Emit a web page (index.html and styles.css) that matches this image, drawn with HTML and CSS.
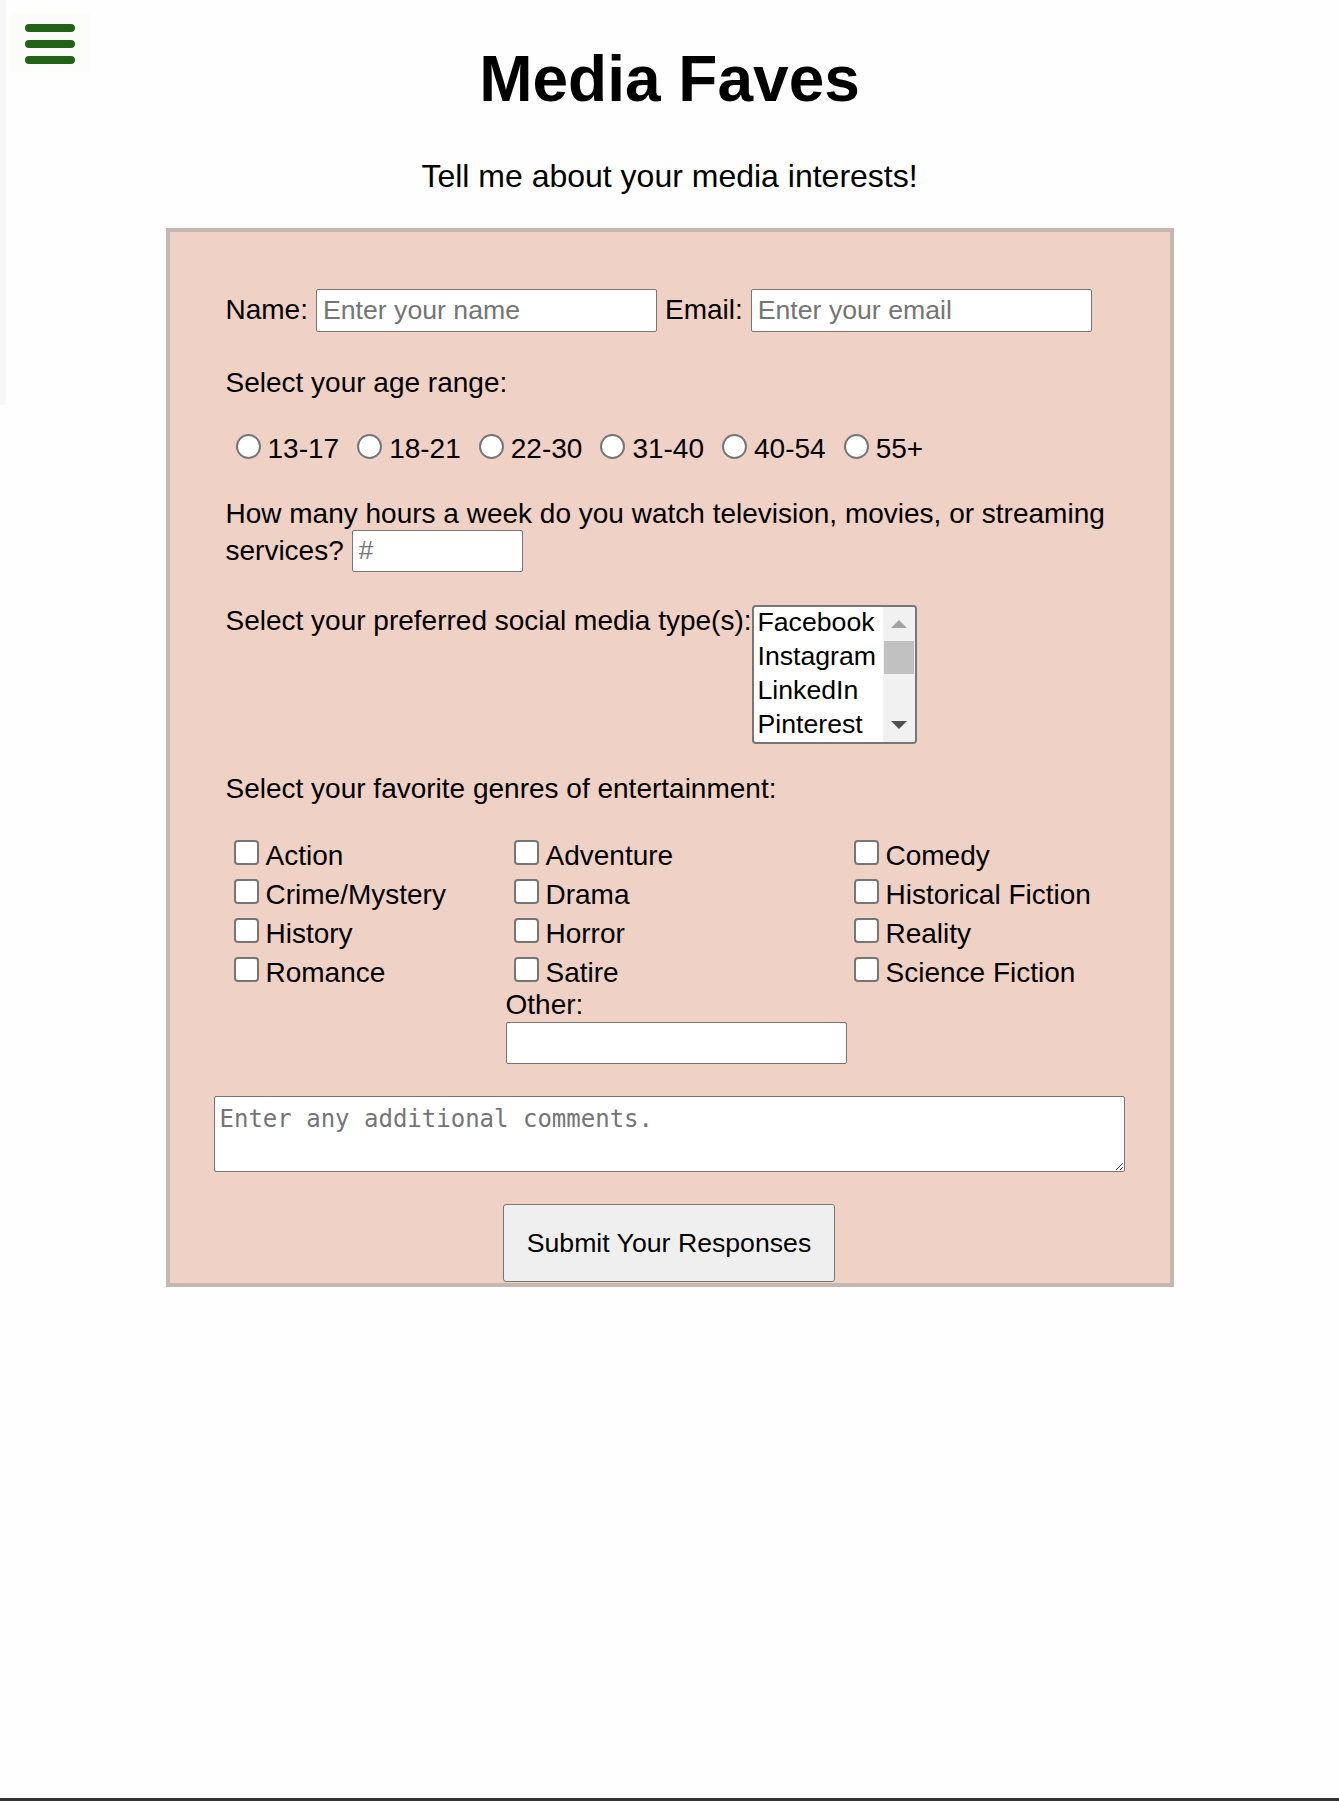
FILE: index.html
```html
<!DOCTYPE html>
<html lang="en">
<head>
<meta charset="utf-8">
<title>Media Faves</title>
<link rel="stylesheet" href="styles.css">
</head>
<body>
<div class="page">
  <nav class="sidenav" aria-label="Site menu"></nav>
  <button class="menu-btn" type="button" aria-label="Open menu"><span></span><span></span><span></span></button>

  <header class="masthead">
    <h1 class="title">Media Faves</h1>
    <p class="tagline">Tell me about your media interests!</p>
  </header>

  <form class="survey">
    <div class="questions">
      <div class="row-contact">
        <label class="field">Name:<input class="text-input" type="text" placeholder="Enter your name"></label>
        <label class="field">Email:<input class="text-input" type="email" placeholder="Enter your email"></label>
      </div>

      <p class="q age-label">Select your age range:</p>
      <div class="age-row">
        <label class="choice"><input class="radio" type="radio" name="age"><span>13-17</span></label>
        <label class="choice"><input class="radio" type="radio" name="age"><span>18-21</span></label>
        <label class="choice"><input class="radio" type="radio" name="age"><span>22-30</span></label>
        <label class="choice"><input class="radio" type="radio" name="age"><span>31-40</span></label>
        <label class="choice"><input class="radio" type="radio" name="age"><span>40-54</span></label>
        <label class="choice"><input class="radio" type="radio" name="age"><span>55+</span></label>
      </div>

      <p class="q hours">How many hours a week do you watch television, movies, or streaming services? <input class="text-input num-input" type="number" placeholder="#"></p>

      <div class="social-row">
        <span class="social-label">Select your preferred social media type(s):</span>
        <div class="listbox" role="listbox" aria-multiselectable="true" aria-label="Social media types">
          <div class="options">
            <div class="option" role="option">Facebook</div>
            <div class="option" role="option">Instagram</div>
            <div class="option" role="option">LinkedIn</div>
            <div class="option" role="option">Pinterest</div>
          </div>
          <div class="scrollbar" aria-hidden="true">
            <span class="sb-btn sb-up"></span>
            <span class="sb-track"><span class="sb-thumb"></span></span>
            <span class="sb-btn sb-down"></span>
          </div>
        </div>
      </div>

      <p class="q genres-label">Select your favorite genres of entertainment:</p>
      <div class="genre-grid">
        <div class="genre-col">
          <label class="choice"><input class="checkbox" type="checkbox"><span>Action</span></label>
          <label class="choice"><input class="checkbox" type="checkbox"><span>Crime/Mystery</span></label>
          <label class="choice"><input class="checkbox" type="checkbox"><span>History</span></label>
          <label class="choice"><input class="checkbox" type="checkbox"><span>Romance</span></label>
        </div>
        <div class="genre-col">
          <label class="choice"><input class="checkbox" type="checkbox"><span>Adventure</span></label>
          <label class="choice"><input class="checkbox" type="checkbox"><span>Drama</span></label>
          <label class="choice"><input class="checkbox" type="checkbox"><span>Horror</span></label>
          <label class="choice"><input class="checkbox" type="checkbox"><span>Satire</span></label>
          <label class="other-label" for="other">Other:</label>
          <input class="text-input other-input" id="other" type="text">
        </div>
        <div class="genre-col">
          <label class="choice"><input class="checkbox" type="checkbox"><span>Comedy</span></label>
          <label class="choice"><input class="checkbox" type="checkbox"><span>Historical Fiction</span></label>
          <label class="choice"><input class="checkbox" type="checkbox"><span>Reality</span></label>
          <label class="choice"><input class="checkbox" type="checkbox"><span>Science Fiction</span></label>
        </div>
      </div>
    </div>

    <textarea class="comments" placeholder="Enter any additional comments."></textarea>

    <button class="submit" type="submit">Submit Your Responses</button>
  </form>

  <footer class="page-foot"></footer>
</div>
</body>
</html>
```

FILE: styles.css
```css
* {
  box-sizing: border-box;
}

html,
body {
  margin: 0;
  padding: 0;
}

body {
  background: #fefefe;
  color: #000;
  font-family: "Liberation Sans", Arial, sans-serif;
}

.page {
  position: relative;
  min-height: 1801px;
  display: flex;
  flex-direction: column;
}

/* collapsed side navigation + toggle (overlay) */
.sidenav {
  position: absolute;
  left: 0;
  top: 0;
  width: 6px;
  height: 405px;
  background: #f7f7f7;
  border-bottom-right-radius: 3px;
}

.menu-btn {
  position: absolute;
  left: 10px;
  top: 13px;
  width: 80px;
  height: 59px;
  padding: 11px 0 0 15px;
  border: 0;
  background: #fcfcfa;
  display: flex;
  flex-direction: column;
  gap: 8px;
  cursor: pointer;
}

.menu-btn span {
  display: block;
  width: 50px;
  height: 8px;
  border-radius: 4px;
  background: #236318;
}

/* header */
.masthead {
  text-align: center;
}

.title {
  margin: 42px 0 0;
  font-size: 64px;
  line-height: 74px;
  font-weight: 700;
}

.tagline {
  margin: 42px 0 0;
  font-size: 32px;
  line-height: 37px;
}

/* form card */
.survey {
  width: 1008px;
  margin: 32.5px auto 0;
  border: 4px solid #c4b8b1;
  background: #efd1c5;
  padding: 57px 45px 0.4px 44px;
  font-size: 28px;
  line-height: 32px;
}

.questions {
  padding-left: 12px;
}

.q {
  margin: 0;
}

.text-input {
  height: 42px;
  border: 1px solid #767676;
  border-radius: 2px;
  background: #fff;
  padding: 0 6px;
  font-family: "Liberation Sans", Arial, sans-serif;
  font-size: 26.67px;
  color: #000;
}

.text-input::placeholder {
  color: #757575;
}

.row-contact {
  display: flex;
  align-items: center;
  gap: 8px;
  height: 43px;
}

.field {
  display: flex;
  align-items: center;
  gap: 8px;
}

.field .text-input {
  width: 341px;
  height: 43px;
}

.age-label {
  margin-top: 35px;
}

.age-row {
  margin-top: 33.5px;
  height: 33px;
  display: flex;
  align-items: flex-end;
}

.choice {
  display: flex;
  align-items: flex-end;
}

.age-row .choice {
  margin-right: 8px;
}

.radio,
.checkbox {
  appearance: none;
  -webkit-appearance: none;
  flex: none;
  width: 25px;
  height: 25px;
  border: 2px solid #767676;
  background: #fff;
}

.radio {
  margin: 0 7px 6.3px 10px;
  border-radius: 50%;
}

.checkbox {
  margin: 0 7px 6.3px 8px;
  border-radius: 4px;
}

.hours {
  margin-top: 32.7px;
}

.num-input {
  width: 171px;
  vertical-align: baseline;
}

.num-input::-webkit-inner-spin-button,
.num-input::-webkit-outer-spin-button {
  -webkit-appearance: none;
  margin: 0;
}

.social-row {
  margin-top: 33px;
  display: flex;
  align-items: flex-start;
}

/* multi-select listbox */
.listbox {
  display: flex;
  width: 165px;
  height: 139px;
  border: 2px solid #767676;
  border-radius: 4px;
  background: #fff;
  overflow: hidden;
  font-size: 26.67px;
}

.options {
  flex: 1;
}

.option {
  height: 34px;
  line-height: 30px;
  padding: 0 4px 4px;
  white-space: nowrap;
}

.scrollbar {
  width: 32px;
  display: flex;
  flex-direction: column;
  background: #f1f1f1;
}

.sb-btn {
  height: 34px;
  display: flex;
  align-items: center;
  justify-content: center;
}

.sb-up::before {
  content: "";
  border-left: 8px solid transparent;
  border-right: 8px solid transparent;
  border-bottom: 8px solid #a3a3a3;
}

.sb-down::before {
  content: "";
  border-left: 8px solid transparent;
  border-right: 8px solid transparent;
  border-top: 8px solid #505050;
}

.sb-track {
  flex: 1;
  padding: 0 1px;
}

.sb-thumb {
  display: block;
  height: 33px;
  background: #c1c1c1;
}

/* genres */
.genres-label {
  margin-top: 29.5px;
}

.genre-grid {
  margin-top: 27.5px;
  display: grid;
  grid-template-columns: 280px 340px 1fr;
}

.genre-col .choice {
  height: 39px;
}

.other-label {
  display: block;
}

.other-input {
  display: block;
  width: 341px;
  margin-top: 1px;
}

/* comments + submit */
.comments {
  display: block;
  width: 100%;
  height: 76px;
  margin-top: 32.6px;
  border: 1px solid #767676;
  border-radius: 2px;
  background: #fff;
  padding: 7.5px 5px;
  font-family: "DejaVu Sans Mono", monospace;
  font-size: 24px;
  line-height: 28px;
  color: #000;
}

.comments::placeholder {
  color: #757575;
}

.submit {
  display: block;
  width: 332px;
  height: 78px;
  margin: 32px auto 0;
  padding: 0;
  border: 1px solid #767676;
  border-radius: 3px;
  background: #efefef;
  color: #000;
  font-family: "Liberation Sans", Arial, sans-serif;
  font-size: 26.67px;
}

.page-foot {
  margin-top: auto;
  height: 3px;
  background: #333;
}
```
